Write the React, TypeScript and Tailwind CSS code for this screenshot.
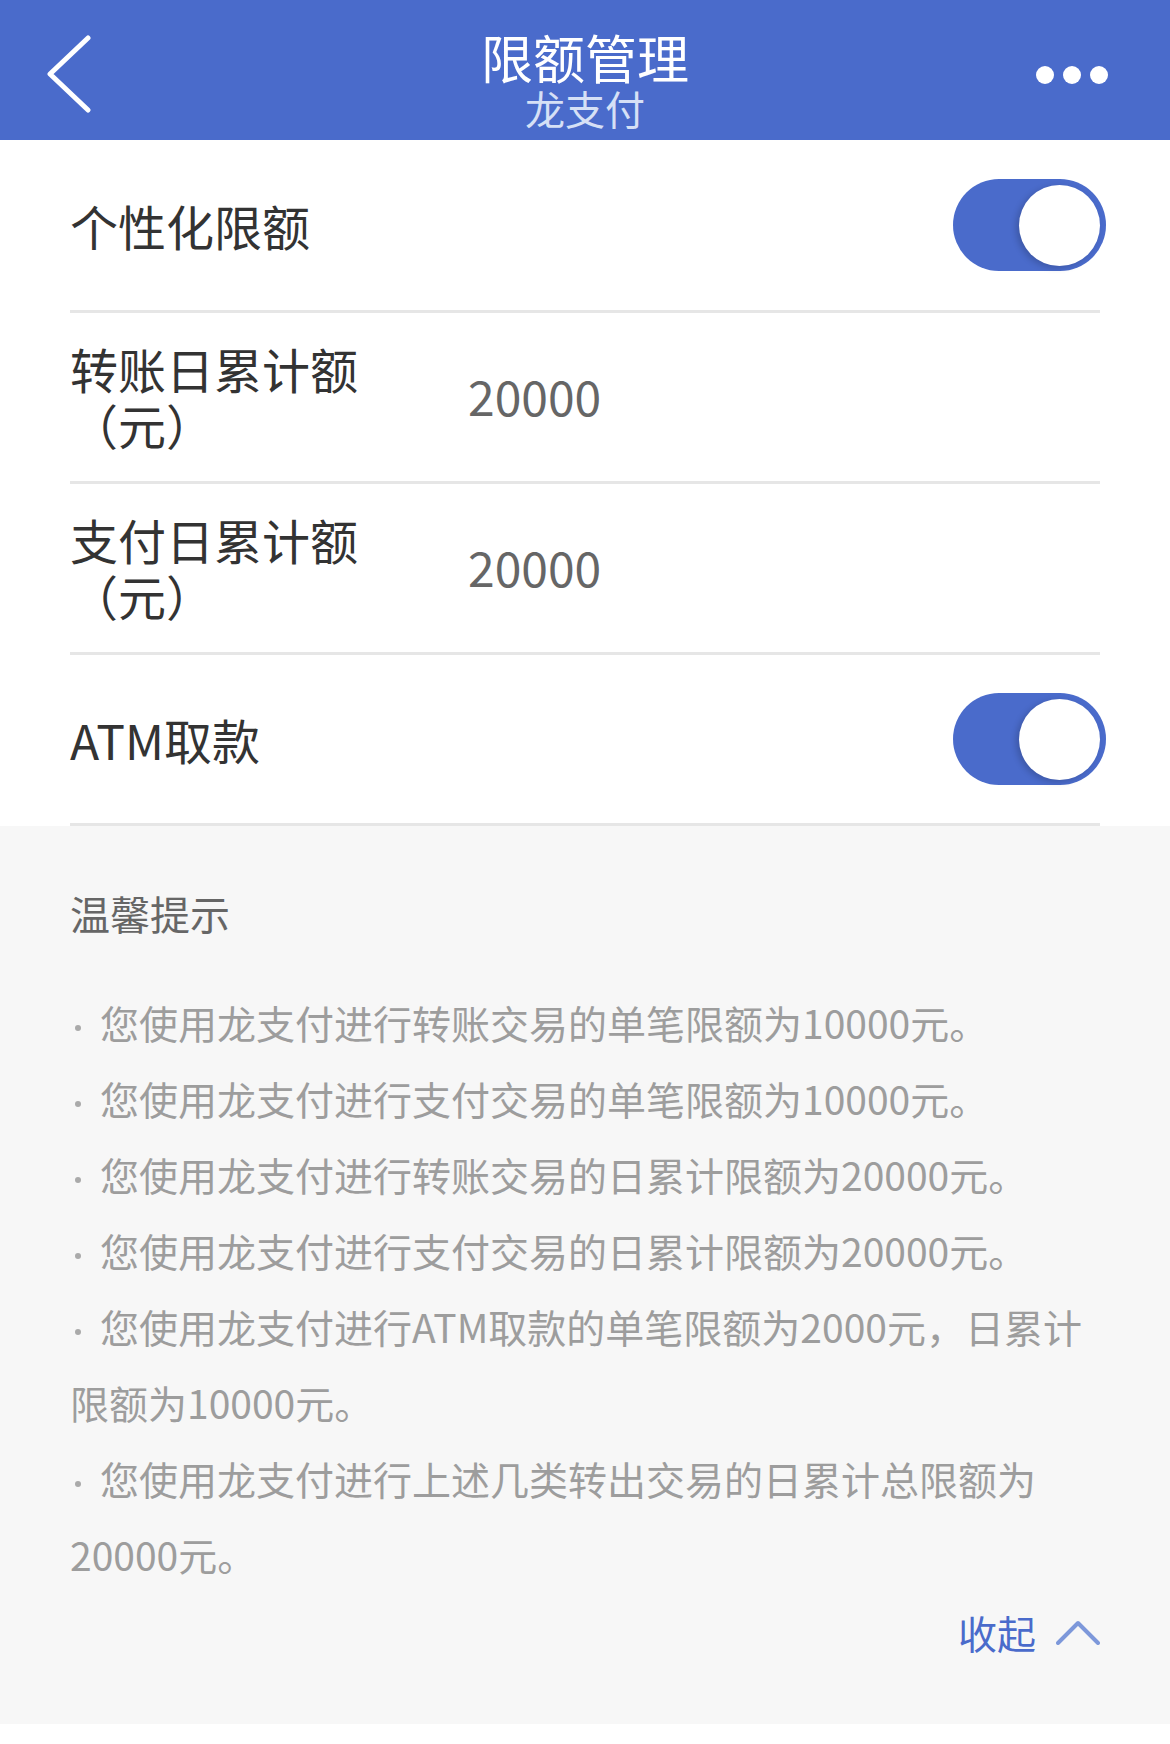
const tips = [
  "您使用龙支付进行转账交易的单笔限额为10000元。",
  "您使用龙支付进行支付交易的单笔限额为10000元。",
  "您使用龙支付进行转账交易的日累计限额为20000元。",
  "您使用龙支付进行支付交易的日累计限额为20000元。",
  "您使用龙支付进行ATM取款的单笔限额为2000元，日累计限额为10000元。",
  "您使用龙支付进行上述几类转出交易的日累计总限额为20000元。",
];

function Toggle() {
  return (
    <div className="-mr-[6px] flex h-[92px] w-[153px] items-center justify-end rounded-full bg-[#4a6bcb] pr-[6px]">
      <div className="h-[81px] w-[81px] rounded-full bg-white shadow-[-3px_2px_6px_rgba(0,0,0,0.18)]" />
    </div>
  );
}

function Row({ label, children, tall }: { label: React.ReactNode; children?: React.ReactNode; tall?: boolean }) {
  return (
    <div className={`flex items-center border-b-[3px] border-[#e6e6e6] ${tall ? "h-[173px]" : "h-[171px]"}`}>
      {label}
      {children}
    </div>
  );
}

export default function App() {
  return (
    <div
      className="min-h-[1744px] w-[1170px] bg-white"
      style={{ fontFamily: '"Noto Sans CJK SC", "Noto Sans", sans-serif' }}
    >
      <header className="grid h-[140px] grid-cols-[1fr_auto_1fr] items-center bg-[#4a6bcb] px-[46px]">
        <svg width="46" height="78" viewBox="0 0 46 78" className="mt-[8px]" fill="none">
          <path d="M42 3 L4 39 L42 75" stroke="white" strokeWidth="5" strokeLinecap="round" strokeLinejoin="round" />
        </svg>
        <div className="flex flex-col items-center pt-[18px]">
          <h1 className="text-[52px] leading-[58px] text-white">限额管理</h1>
          <p className="text-[40px] leading-[44px] text-[#d6e0f6]">龙支付</p>
        </div>
        <div className="mt-[10px] mr-[16px] flex justify-end gap-[9px]">
          <span className="h-[18px] w-[18px] rounded-full bg-white" />
          <span className="h-[18px] w-[18px] rounded-full bg-white" />
          <span className="h-[18px] w-[18px] rounded-full bg-white" />
        </div>
      </header>

      <section className="mx-[70px]">
        <Row tall label={<span className="flex-1 text-[48px] text-[#333]">个性化限额</span>}>
          <Toggle />
        </Row>
        <Row label={<span className="-mt-[3px] w-[300px] text-[48px] leading-[56px] text-[#333]">转账日累计额（元）</span>}>
          <span className="-mt-[4px] ml-[98px] text-[48px] text-[#666]">20000</span>
        </Row>
        <Row label={<span className="-mt-[3px] w-[300px] text-[48px] leading-[56px] text-[#333]">支付日累计额（元）</span>}>
          <span className="-mt-[4px] ml-[98px] text-[48px] text-[#666]">20000</span>
        </Row>
        <Row label={<span className="flex-1 text-[48px] text-[#333]">ATM取款</span>}>
          <Toggle />
        </Row>
      </section>

      <section className="bg-[#f7f7f7] px-[70px] pt-[59px] pb-[64px]">
        <h2 className="text-[40px] leading-[56px] text-[#666]">温馨提示</h2>
        <div className="mt-[43px] text-[39px] leading-[76px] text-[#9d9d9d]">
          {tips.map((tip) => (
            <p key={tip}>
              <span className="inline-block w-[30px] align-middle">
                <span className="ml-[5px] block h-[6px] w-[6px] rounded-full bg-[#aaa]" />
              </span>
              {tip}
            </p>
          ))}
        </div>
        <div className="mt-[12px] flex items-center justify-end gap-[20px]">
          <span className="text-[39px] leading-[56px] text-[#4a6bcb]">收起</span>
          <svg width="44" height="26" viewBox="0 0 44 26" fill="none">
            <path d="M2 24 L22 4 L42 24" stroke="#7d98da" strokeWidth="4" strokeLinecap="round" strokeLinejoin="round" />
          </svg>
        </div>
      </section>
    </div>
  );
}
